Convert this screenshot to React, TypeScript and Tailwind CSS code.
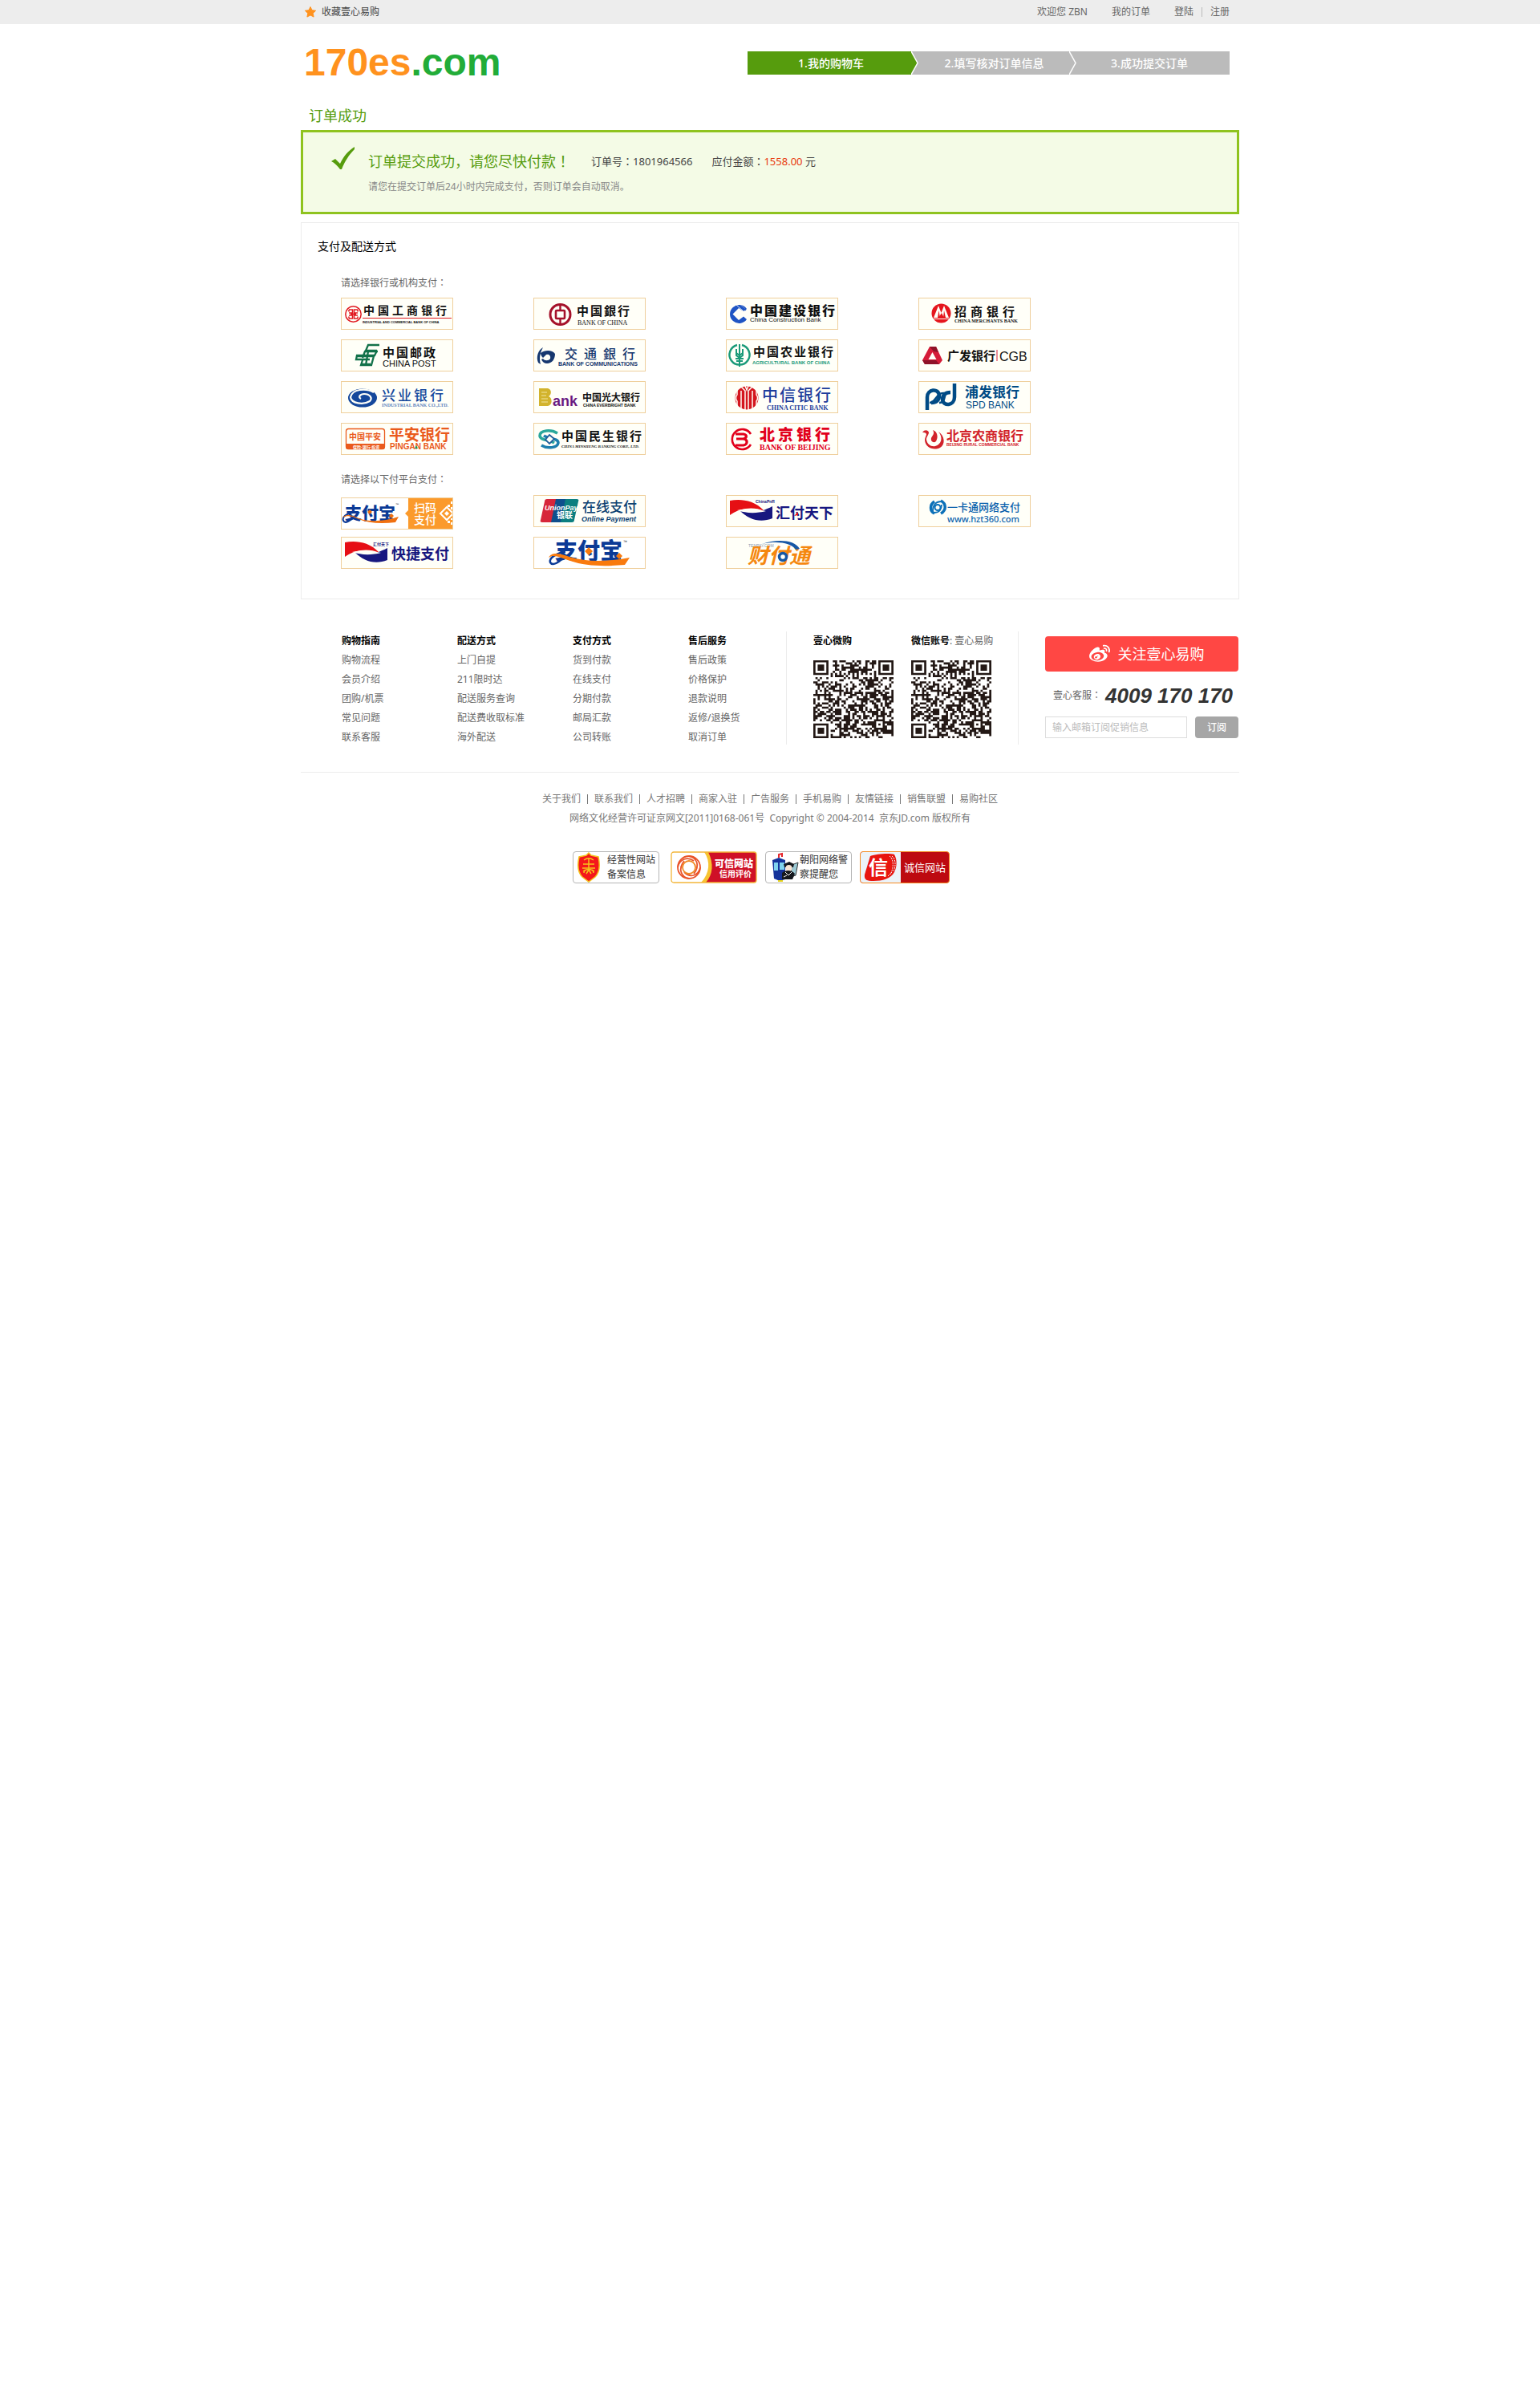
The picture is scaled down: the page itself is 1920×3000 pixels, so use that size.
import React from "react";
import { FaWeibo } from "react-icons/fa";

const CJK = '"Noto Sans","Noto Sans CJK SC",sans-serif';
const SANS = '"Liberation Sans","Noto Sans CJK SC",sans-serif';
const SERIF = '"Liberation Serif",serif';

type TProps = {
  x: number;
  y: number;
  s: number;
  c?: string;
  w?: number;
  f?: string;
  i?: boolean;
  pitch?: number;
  children: string;
};

function T({ x, y, s, c = "#111111", w = 400, f = SANS, i = false, pitch, children }: TProps) {
  const xs = pitch ? Array.from(children, (_, n) => x + n * pitch).join(" ") : x;
  return (
    <text x={xs} y={y} fontSize={s} fill={c} fontWeight={w} fontFamily={f} fontStyle={i ? "italic" : "normal"}>
      {children}
    </text>
  );
}

function Swoosh() {
  return (
    <g>
      <path d="M5 25V7c12-2 29-2 43 13-14-6-30-4-43 5z" fill="#e60f14" />
      <path d="M17 19c14 5 28 2 41-5v15c-15 6-29 2-41-10z" fill="#17177f" />
      <path d="M14 19c12-3 24-2 36 1-12 3-24 3-36-1z" fill="#fffff8" />
    </g>
  );
}

type Logo = { name: string; art: React.ReactNode };

const banks: Logo[] = [
  {
    name: "中国工商银行",
    art: (
      <g>
        <circle cx="15.5" cy="20.5" r="9.7" fill="none" stroke="#e11b22" strokeWidth="1.5" />
        <path d="M10 15h4.500v4H10M10 26h4.500v-4H10M21 15h-4.500v4H21M21 26h-4.500v-4H21M10 15v2.500M21 15v2.500M10 26v-2.500M21 26v-2.500M12 20.500h7" fill="none" stroke="#e11b22" strokeWidth="1.5" />
        <T x={28} y={21} s={14} w={700} pitch={18}>中国工商银行</T>
        <path d="M27 25.500h111" stroke="#e11b22" />
        <T x={27} y={32} s={4} w={700}>INDUSTRIAL AND COMMERCIAL BANK OF CHINA</T>
      </g>
    ),
  },
  {
    name: "中国银行",
    art: (
      <g>
        <circle cx="33.5" cy="21" r="12.5" fill="none" stroke="#a5122b" strokeWidth="3" />
        <rect x="28" y="16" width="11" height="10" rx="1" fill="none" stroke="#a5122b" strokeWidth="2.600" />
        <path d="M33.500 8v8M33.500 26v8" stroke="#a5122b" strokeWidth="2.400" />
        <T x={54} y={22} s={15} w={700} pitch={17}>中国銀行</T>
        <T x={55} y={34} s={8} f={SERIF}>BANK OF CHINA</T>
      </g>
    ),
  },
  {
    name: "中国建设银行",
    art: (
      <g>
        <path d="M26 14a11.500 11.500 0 1 0 0 13l-4-3.500-6 4.500-7.500-7.500L16 13l6 4z" fill="#1f55c4" />
        <path d="M13 9l9 8M17 8l8 7" stroke="#fffff8" strokeWidth="0.800" />
        <path d="M17 9.500l8 6" stroke="#1f55c4" strokeWidth="1.800" />
        <T x={30} y={22} s={16} w={900} pitch={18}>中国建设银行</T>
        <T x={30} y={30} s={8}>China Construction Bank</T>
      </g>
    ),
  },
  {
    name: "招商银行",
    art: (
      <g>
        <circle cx="28.500" cy="19.500" r="12" fill="#e5161d" />
        <path d="M19 25l6-15 3.500 9L32 10l6 15h-6l-3-6-4 6z" fill="#fffff8" />
        <path d="M24 25l1.500-9 1.500 9zM31 25l1-9 2 9z" fill="#e5161d" />
        <path d="M18 26.500h21" stroke="#fffff8" />
        <T x={45} y={23} s={15} w={700} pitch={20}>招商银行</T>
        <T x={45} y={31} s={6} w={700} f={SERIF}>CHINA MERCHANTS BANK</T>
      </g>
    ),
  },
  {
    name: "中国邮政",
    art: (
      <g>
        <path d="M48 7H34l-3 7h14M46 15H30l-3 8M19 21h22l-3 11H25l2-6M45 14l-3 6H20l-1 5h17M34 15l-3 17M26 31h11" fill="none" stroke="#12714a" strokeWidth="2.300" />
        <T x={52} y={22} s={15} w={700} pitch={17}>中国邮政</T>
        <T x={52} y={34} s={11}>CHINA POST</T>
      </g>
    ),
  },
  {
    name: "交通银行",
    art: (
      <g>
        <path d="M12 10c-6 3-9 12-6 19l3 2c-2-7-1-14 3-21z" fill="#16376f" />
        <path d="M9 17c5-4 15-4 18 1 0 7-4 12-10 12-3 0-6-2-7-5l2-1c2 3 7 3 9 0 1-4-2-6-5-5l-4 4c-2-2-3-4-3-6z" fill="#16376f" />
        <T x={39} y={24} s={16} w={500} c="#16376f" pitch={24}>交通銀行</T>
        <T x={31} y={33} s={7} w={700} c="#16376f">BANK OF COMMUNICATIONS</T>
      </g>
    ),
  },
  {
    name: "中国农业银行",
    art: (
      <g>
        <path d="M14 7a12.500 12.500 0 1 0 6 0" fill="none" stroke="#1a9a78" strokeWidth="2.400" />
        <path d="M17 6v28M13 12v8l4 3 4-3v-8M13 17l4 3 4-3M12 24h10M13 27h8" fill="none" stroke="#1a9a78" strokeWidth="2" />
        <T x={34} y={21} s={15} w={700} pitch={17}>中国农业银行</T>
        <T x={33} y={31} s={6} w={700} c="#1a9a78">AGRICULTURAL BANK OF CHINA</T>
      </g>
    ),
  },
  {
    name: "广发银行",
    art: (
      <g>
        <path d="M14 9h8l8 17-4 5H8l-3-5z" fill="#d51c38" />
        <path d="M14 9h8l3 7-6-1zM5 26l3 5h18l-4-5z" fill="#8e1228" />
        <path d="M17.500 16l5 9h-10z" fill="#fffff8" />
        <T x={36} y={26} s={15} w={700}>广发银行</T>
        <path d="M98 13v14" stroke="#d51c38" />
        <T x={101} y={27} s={16}>CGB</T>
      </g>
    ),
  },
  {
    name: "兴业银行",
    art: (
      <g>
        <ellipse cx="27" cy="21" rx="18" ry="11.500" fill="#15489c" />
        <path d="M41 14c-10-6-27-4-29 6 1 8 16 10 24 5 4-4 0-9-7-9-5 0-8 4-4 6" fill="none" stroke="#fffff8" strokeWidth="2.200" />
        <T x={51} y={24} s={17} w={500} c="#15489c" pitch={20}>兴业银行</T>
        <T x={51} y={32} s={6} w={700} f={SERIF} c="#5d83bd">INDUSTRIAL BANK CO.,LTD.</T>
      </g>
    ),
  },
  {
    name: "中国光大银行",
    art: (
      <g>
        <path d="M7 9h11c5 1 5 8 1 10 5 2 5 11-1 12H7z" fill="#d2b32c" />
        <path d="M10 14h7M10 18h6M10 22h8M10 26h8" stroke="#f1e5a0" strokeWidth="1" />
        <T x={24} y={31} s={18} w={700} c="#6a1a80">ank</T>
        <T x={61} y={25} s={12} w={700}>中国光大银行</T>
        <T x={62} y={32} s={5} w={700}>CHINA EVERBRIGHT BANK</T>
      </g>
    ),
  },
  {
    name: "中信银行",
    art: (
      <g>
        <circle cx="26" cy="21" r="14.500" fill="#d4161e" />
        <path d="M18 6l6 6v25M34 6l-6 6v25M19 12v25M33 12v25M14 9v8c-2 2-2 6 0 8v9M38 9v8c2 2 2 6 0 8v9M24 6l2 5 2-5" fill="none" stroke="#fffff8" strokeWidth="1.500" />
        <T x={45} y={25} s={20} w={500} c="#1b3d9c" pitch={22}>中信银行</T>
        <T x={51} y={36} s={8} w={700} f={SERIF} c="#1b3d9c">CHINA CITIC BANK</T>
      </g>
    ),
  },
  {
    name: "浦发银行",
    art: (
      <g fill="none" stroke="#004b85">
        <path d="M11 36V20c0-10 14-12 15-2 0 6-4 9-10 9" strokeWidth="4.500" />
        <path d="M45 3v17c0 11-14 12-15 3 0-5 3-9 10-9" strokeWidth="4.500" />
        <path d="M14 27c8 0 8-13 18-12M26 27c7 0 6-6 8-12" strokeWidth="2.500" />
        <g stroke="none">
          <T x={58} y={20} s={17} w={700} c="#004b85">浦发银行</T>
          <T x={59} y={34} s={12} c="#004b85">SPD BANK</T>
        </g>
      </g>
    ),
  },
  {
    name: "平安银行",
    art: (
      <g>
        <rect x="6.500" y="7.500" width="48" height="25" rx="3" fill="none" stroke="#ea5a1c" strokeWidth="1.300" />
        <path d="M6 26h49v4c0 2-1 3-3 3H9c-2 0-3-1-3-3z" fill="#ea5a1c" />
        <T x={10} y={21} s={10} w={700} c="#ea5a1c">中国平安</T>
        <T x={15} y={32} s={5} w={700} c="#ffffff">保险·银行·投资</T>
        <T x={60} y={22} s={19} w={700} c="#ea5a1c">平安银行</T>
        <T x={61} y={33} s={10} w={700} c="#ea5a1c">PINGAN BANK</T>
        <path d="M92 32l2-4 2 4z" fill="#1a9a50" />
      </g>
    ),
  },
  {
    name: "中国民生银行",
    art: (
      <g fill="none">
        <path d="M30 13C22 8 8 9 8 16c0 6 12 5 18 9" stroke="#2aa79b" strokeWidth="3.500" />
        <path d="M10 28c8 5 20 3 21-3 0-6-12-5-18-9" stroke="#1d7fae" strokeWidth="3.500" />
        <path d="M20 15l6 5-6 6-5-5z" stroke="#1f5f9c" strokeWidth="1.800" fill="#fffff8" />
        <T x={35} y={22} s={15} w={700} pitch={17}>中国民生银行</T>
        <T x={35} y={31} s={5} w={700} i f={SERIF}>CHINA MINSHENG BANKING CORP., LTD.</T>
      </g>
    ),
  },
  {
    name: "北京银行",
    art: (
      <g>
        <path d="M31 27a12.500 12.500 0 1 1 0-13" fill="none" stroke="#e2001b" strokeWidth="2.600" />
        <path d="M12 14h10c5 1 4 5 0 6h-9M22 20c6 1 5 7 0 8H12" fill="none" stroke="#e2001b" strokeWidth="3.200" />
        <T x={42} y={22} s={19} w={900} c="#e2001b" pitch={23}>北京银行</T>
        <T x={42} y={34} s={10} w={700} f={SERIF} c="#e2001b">BANK OF BEIJING</T>
      </g>
    ),
  },
  {
    name: "北京农商银行",
    art: (
      <g>
        <path d="M5 12c3-4 7-3 8 0 0 3-3 5-3 9 1 6 6 9 11 8 8-2 10-11 4-18 8 5 9 16 2 20-8 4-18 0-19-9 0-4 2-6 2-8-1-2-3-2-5-2z" fill="#d2232a" />
        <path d="M18 9c6 2 7 9 4 14-3 3-7 0-6-4 1-3 5-5 2-10z" fill="#d2232a" />
        <T x={35} y={22} s={16} w={700} c="#d2232a">北京农商银行</T>
        <T x={35} y={29} s={5} w={700} c="#d2232a">BEIJING RURAL COMMERCIAL BANK</T>
      </g>
    ),
  },
];

const platforms: Logo[] = [
  {
    name: "支付宝扫码支付",
    art: (
      <g>
        <rect x="1" y="1" width="82" height="38" fill="#ffffff" />
        <T x={5} y={27} s={21} w={900} c="#0b3a96">支付宝</T>
        <path d="M15 19C7 20 1 24 3 29c2 4 9 1 13-6" fill="none" stroke="#0b3a96" strokeWidth="2" />
        <path d="M2 25c4-5 12-3 20 1 14 5 31 4 50-2l-4 7c-18 2-34 1-46-4-8-4-14-5-20-2z" fill="#f1700f" />
        <path d="M36 15l3 3-3 3-3-3zM63 20l3 3-3 3-3-3z" fill="#f1700f" />
        <T x={68} y={10} s={4}>™</T>
        <path d="M84 1h55v38H84V24l-4-4 4-4z" fill="#fb9a2c" />
        <T x={91} y={18} s={14} c="#ffffff" w={500}>扫码</T>
        <T x={91} y={33} s={14} c="#ffffff" w={500}>支付</T>
        <path d="M132 12l8 8-8 8-8-8z" fill="none" stroke="#ffffff" strokeWidth="2" />
        <path d="M132 17l3 3-3 3-3-3z" fill="#ffffff" />
        <path d="M133 9h3v3h-3zM137 5h2v3h-2zM137 12h2v3h-2zM133 29h3v3h-3zM137 31h2v3h-2zM137 26h2v2h-2z" fill="#ffffff" />
      </g>
    ),
  },
  {
    name: "银联在线支付",
    art: (
      <g>
        <path d="M17 5h12l-6 29H11c-2 0-3-1-2-3l5-23c0-2 1-3 3-3z" fill="#d7263a" />
        <path d="M28 5h14l-6 29H22z" fill="#0f4f8c" />
        <path d="M40 5h14c2 0 3 1 2 3l-5 23c0 2-1 3-3 3H34z" fill="#0c7f80" />
        <T x={14} y={19} s={9} w={700} i c="#ffffff">UnionPay</T>
        <T x={29} y={29} s={10} w={700} c="#ffffff">银联</T>
        <T x={61} y={21} s={17} w={500} c="#0d4272">在线支付</T>
        <T x={60} y={33} s={9} w={700} i c="#0d4272">Online Payment</T>
      </g>
    ),
  },
  {
    name: "汇付天下",
    art: (
      <g>
        <Swoosh />
        <T x={37} y={10} s={5} w={700} c="#17177f">ChinaPnR</T>
        <T x={62} y={29} s={18} w={700} c="#17177f">汇付天下</T>
        <path d="M85 26l5-5v4z" fill="#e60f14" />
      </g>
    ),
  },
  {
    name: "一卡通网络支付",
    art: (
      <g>
        <path d="M20 8c-6 4-6 12 0 15M28 7c7 4 7 12 0 16" fill="none" stroke="#0b70b8" strokeWidth="3.500" />
        <path d="M18 20c0-8 4-12 11-12M20 22c6 0 9-4 9-10" fill="none" stroke="#0b70b8" strokeWidth="1.800" />
        <circle cx="24" cy="15.500" r="3.500" fill="none" stroke="#0b70b8" strokeWidth="2" />
        <T x={36} y={20} s={13} w={500} c="#0b62ad">一卡通网络支付</T>
        <T x={36} y={34} s={11} w={500} f={CJK} c="#0b62ad">www.hzt360.com</T>
      </g>
    ),
  },
  {
    name: "快捷支付",
    art: (
      <g>
        <Swoosh />
        <T x={40} y={11} s={5} w={700} c="#17177f">汇付天下</T>
        <T x={63} y={28} s={18} w={700} c="#17177f">快捷支付</T>
      </g>
    ),
  },
  {
    name: "支付宝",
    art: (
      <g>
        <rect x="1" y="1" width="138" height="38" fill="#ffffff" />
        <T x={27} y={28} s={28} w={900} c="#0b3a96">支付宝</T>
        <path d="M40 19c-10 1-21 7-19 13 3 5 12 0 18-9" fill="none" stroke="#0b3a96" strokeWidth="2.500" />
        <path d="M19 26c4-8 15-5 26-1 22 7 48 6 75 1l-6 9c-24 2-48 2-68-5-12-4-21-9-27-4z" fill="#f97a0d" />
        <path d="M69 13l5 5-5 5-5-5zM107 20l4 4-4 4-4-4z" fill="#f97a0d" />
        <T x={112} y={8} s={5}>™</T>
      </g>
    ),
  },
  {
    name: "财付通",
    art: (
      <g>
        <T x={28} y={13} s={5} c="#8797ad">TENPAY.COM</T>
        <T x={27} y={33} s={26} w={700} i c="#f5870f">财付通</T>
        <path d="M45 9c18-6 40-6 47 6l-5 1c-6-9-24-11-42-7z" fill="#1657a5" />
        <circle cx="71" cy="25" r="4.500" fill="#fffff8" stroke="#1657a5" strokeWidth="3.500" />
      </g>
    ),
  },
];

function Tile({ logo, className = "" }: { logo: Logo; className?: string }) {
  return (
    <button
      type="button"
      aria-label={logo.name}
      className={"h-10 w-[140px] overflow-hidden border border-[#efcf9c] bg-[#fffff8] " + className}
    >
      <svg viewBox="1 1 138 38" className="block h-full w-full" aria-hidden="true">
        {logo.art}
      </svg>
    </button>
  );
}

const N = 37;

function qrPath(): string {
  let seed = 20147;
  const parts: string[] = [];
  const ring = (r: number, c: number, size: number) => {
    const d = Math.max(Math.abs(r), Math.abs(c));
    return size === 7 ? d !== 2 : d !== 1;
  };
  for (let r = 0; r < N; r++) {
    for (let c = 0; c < N; c++) {
      seed = (seed * 1103515245 + 12345) % 2147483648;
      let on = (seed >> 12) % 100 < 54;
      const top = r < 8;
      const left = c < 8;
      const right = c > N - 9;
      const bottom = r > N - 9;
      if ((top && left) || (top && right) || (bottom && left)) {
        const cr = top ? 3 : N - 4;
        const cc = left ? 3 : N - 4;
        const dr = r - cr;
        const dc = c - cc;
        on = Math.abs(dr) <= 3 && Math.abs(dc) <= 3 && ring(dr, dc, 7);
      } else if (Math.abs(r - 30) <= 2 && Math.abs(c - 30) <= 2) {
        on = ring(r - 30, c - 30, 5);
      } else if (r === 6 || c === 6) {
        on = (r + c) % 2 === 0;
      }
      if (on) parts.push("M" + c + " " + r + "h1v1h-1z");
    }
  }
  return parts.join("");
}

const QR = qrPath();

function QrCode({ label }: { label: string }) {
  return (
    <svg
      role="img"
      aria-label={label}
      viewBox="0 0 37 37"
      preserveAspectRatio="none"
      className="mt-3 block h-[97px] w-[100px]"
    >
      <path d={QR} fill="#231815" />
    </svg>
  );
}

/* Full-width punctuation centred in its cell. */
function P({ children }: { children: string }) {
  return <span className="font-['Noto_Sans_CJK_TC',sans-serif] leading-none">{children}</span>;
}

const helpColumns = [
  { title: "购物指南", items: ["购物流程", "会员介绍", "团购/机票", "常见问题", "联系客服"] },
  { title: "配送方式", items: ["上门自提", "211限时达", "配送服务查询", "配送费收取标准", "海外配送"] },
  { title: "支付方式", items: ["货到付款", "在线支付", "分期付款", "邮局汇款", "公司转账"] },
  { title: "售后服务", items: ["售后政策", "价格保护", "退款说明", "返修/退换货", "取消订单"] },
];

const siteLinks = ["关于我们", "联系我们", "人才招聘", "商家入驻", "广告服务", "手机易购", "友情链接", "销售联盟", "易购社区"];

function TopBar() {
  return (
    <div className="bg-[#ededed] text-xs text-[#666666]">
      <div className="mx-auto flex h-[30px] w-full max-w-[1170px] items-center justify-between pr-3 pl-1">
        <a href="#" className="flex items-center gap-[6px] text-[#444444]">
          <svg viewBox="0 0 16 16" className="h-4 w-4" aria-hidden="true">
            <path
              d="M8 1.500l2 4.200 4.600.6-3.400 3.200.9 4.600L8 11.900l-4.100 2.200.9-4.600L1.400 6.300 6 5.700z"
              fill="#ff921e"
              stroke="#ff921e"
              strokeLinejoin="round"
            />
          </svg>
          收藏壹心易购
        </a>
        <nav className="flex items-center">
          <span>欢迎您 ZBN</span>
          <a href="#" className="ml-[30px]">我的订单</a>
          <a href="#" className="ml-[30px]">登陆</a>
          <span className="mx-[10px] h-3 w-px bg-[#bbbbbb]" />
          <a href="#">注册</a>
        </nav>
      </div>
    </div>
  );
}

function Arrow({ left }: { left: string }) {
  return (
    <svg viewBox="0 0 10 29" className="h-[29px] w-[10px] shrink-0" aria-hidden="true">
      <path d="M0 0h10v29H0z" fill="#bbbbbb" />
      <path d="M0 0l8 14.500L0 29z" fill={left} />
      <path d="M0 0l8 14.500L0 29" fill="none" stroke="#ffffff" strokeWidth="1.500" />
    </svg>
  );
}

function Steps() {
  return (
    <ol className="flex h-[29px] w-[601px] text-sm leading-[29px] font-medium text-white">
      <li className="flex w-[214px]">
        <span className="flex-1 bg-[#569c0d] pl-1 text-center">1.我的购物车</span>
        <Arrow left="#569c0d" />
      </li>
      <li className="flex w-[197px]">
        <span className="flex-1 bg-[#bbbbbb] text-center">2.填写核对订单信息</span>
        <Arrow left="#bbbbbb" />
      </li>
      <li className="flex-1 bg-[#bbbbbb] pr-[10px] text-center">3.成功提交订单</li>
    </ol>
  );
}

function Badges() {
  return (
    <div className="mt-[29px] flex justify-center pr-[22px]">
      <a href="#" className="mr-[14px] flex h-10 w-[108px] items-center rounded-sm border border-[#b5b5b5] pl-1">
        <svg viewBox="0 0 30 38" className="h-[38px] w-[30px]" aria-hidden="true">
          <path d="M15 1l3 3 9 2c2 9 2 19-4 25l-8 6-8-6C1 25 1 15 3 6l9-2z" fill="#f4181b" stroke="#f5c31c" strokeWidth="1.500" />
          <path d="M15 8v16M9 10c4-3 8-3 12 0M8 15h14M7 20h16M9 26c0-6 12-6 12 0M12 27l3-5 3 5M8 24l3-2M22 24l-3-2" fill="none" stroke="#f5c31c" strokeWidth="1.500" />
        </svg>
        <span className="ml-2 text-xs leading-[18px] text-[#333333]">
          经营性网站
          <br />
          备案信息
        </span>
      </a>
      <a href="#" aria-label="可信网站信用评价" className="mr-[10px] block h-10 w-[108px]">
        <svg viewBox="0 0 108 40" className="block h-10 w-[108px]" aria-hidden="true">
          <rect x="1" y="1" width="106" height="38" rx="3" fill="#ffffff" />
          <path d="M44 1h60c2 0 3 1 3 3v32c0 2-1 3-3 3H41c10-12 11-26 3-38z" fill="#cf1127" />
          <path d="M42 1h5c7 14 6 28-3 38h-6c11-12 12-26 4-38z" fill="#f7c331" />
          <rect x="1" y="1" width="106" height="38" rx="3" fill="none" stroke="#f3b63a" strokeWidth="1.300" />
          <g fill="none" strokeWidth="1.800">
            <circle cx="23" cy="20" r="14" stroke="#e9542a" />
            <path d="M23 6c10 2 14 12 6 22M37 20c-2 10-12 14-20 6M23 34c-10-2-14-12-6-22M9 20C11 10 21 6 29 12" stroke="#e9542a" />
            <circle cx="23" cy="20" r="8" stroke="#f08a24" />
          </g>
          <T x={55} y={20} s={12} w={900} c="#ffffff">可信网站</T>
          <T x={61} y={32} s={10} w={700} c="#ffffff">信用评价</T>
        </svg>
      </a>
      <a href="#" className="mr-[10px] flex h-10 w-[108px] items-center rounded-sm border border-[#b5b5b5] pl-[5px]">
        <svg viewBox="0 0 36 38" className="h-[38px] w-9" aria-hidden="true">
          <path d="M3 10l8-3 8 3v24l-7 2-7-3z" fill="#14339b" />
          <path d="M5 13h5v10H5zM12 13h6v9h-6z" fill="#7fd3ee" />
          <path d="M11 7V3l4-1v4" fill="none" stroke="#e5252a" strokeWidth="2" />
          <path d="M27 16l8-3-3 16-6 2z" fill="#9cc9d4" stroke="#333333" />
          <path d="M17 15l7-3 6 3-1 4H18z" fill="#15171d" />
          <circle cx="23.500" cy="20" r="4" fill="#f6e3d3" />
          <path d="M15 26c4-4 12-4 16 1l-3 7H15z" fill="#15171d" />
          <path d="M19 25l4 4 4-4M17 31l4-2" stroke="#ffffff" fill="none" />
          <path d="M10 36h6" stroke="#e8d51c" strokeWidth="2" />
        </svg>
        <span className="ml-px text-xs leading-[18px] whitespace-nowrap text-[#333333]">
          朝阳网络警
          <br />
          察提醒您
        </span>
      </a>
      <a href="#" className="flex h-10 w-28 overflow-hidden rounded-sm border border-[#f58a1f] bg-[#bd0a10]">
        <svg viewBox="0 0 50 38" className="h-[38px] w-[50px] bg-[#ecf3f9]" aria-hidden="true">
          <path d="M12 5C20 2 36 1 42 3c4 7 3 16 0 22-4 8-15 11-26 11-8 0-12-1-11-8z" fill="#e8150f" />
          <path d="M36 5c5 3 6 14 1 23M39 5c5 4 5 12 2 19M34 30l5-5" fill="none" stroke="#ecf3f9" strokeDasharray="2 1" />
          <T x={10} y={28} s={24} w={700} c="#ffffff">信</T>
        </svg>
        <span className="flex-1 text-center text-[13px] leading-[38px] text-white">诚信网站</span>
      </a>
    </div>
  );
}

export default function App() {
  return (
    <div className="min-h-screen bg-white font-['Noto_Sans','Noto_Sans_CJK_SC',sans-serif] text-xs text-[#666666]">
      <TopBar />
      <div className="mx-auto w-full max-w-[1170px]">
        <header className="flex h-24 items-center justify-between pr-3 pl-1">
          <a href="#" className="font-['Liberation_Sans',sans-serif] text-[48px] leading-[56px] font-bold text-[#ff921e]">
            170es<span className="text-[#22ac38]">.com</span>
          </a>
          <Steps />
        </header>

        <h1 className="pl-[10px] text-lg leading-9 text-[#569c0d]">订单成功</h1>

        <section className="flex border-[3px] border-[#8fc31f] bg-[#f4fbe6] pt-[18px] pb-[17px] pl-[35px]">
          <svg viewBox="0 0 30 30" className="h-[30px] w-[30px] shrink-0" aria-hidden="true">
            <path d="M0 18l5-3 6 6C15 12 21 5 29 0v3C22 10 17 18 13 28h-2C8 24 4 20 0 18z" fill="#569c0d" />
          </svg>
          <div className="ml-4">
            <div className="flex h-9 items-center leading-9">
              <h2 className="text-lg leading-9 text-[#569c0d]">
                订单提交成功，请您尽快付款<P>！</P>
              </h2>
              <p className="ml-[26px] text-[13px] text-[#444444]">
                订单号<P>：</P>1801964566
              </p>
              <p className="ml-6 text-[13px] text-[#444444]">
                应付金额<P>：</P>
                <span className="text-[#e8380d]">1558.00</span> 元
              </p>
            </div>
            <p className="leading-7 text-[#888888]">请您在提交订单后24小时内完成支付，否则订单会自动取消。</p>
          </div>
        </section>

        <section className="mt-[10px] border border-[#ececec] px-5 pt-[17px] pb-[37px]">
          <h2 className="text-sm leading-6 text-black">支付及配送方式</h2>
          <div className="pl-[29px]">
            <h3 className="mt-[22px] leading-6">
              请选择银行或机构支付<P>：</P>
            </h3>
            <div className="mt-[6px] grid grid-cols-[repeat(4,240px)] gap-y-3">
              {banks.map((b) => (
                <Tile key={b.name} logo={b} />
              ))}
            </div>
            <h3 className="mt-[19px] leading-6">
              请选择以下付平台支付<P>：</P>
            </h3>
            <div className="mt-[7px] grid grid-cols-[repeat(4,240px)] items-start gap-y-[9px]">
              {platforms.map((p, i) => (
                <Tile key={p.name} logo={p} className={i === 0 ? "mt-[3px]" : ""} />
              ))}
            </div>
          </div>
        </section>

        <footer className="mt-10">
          <div className="flex h-[141px]">
            <div className="flex w-[606px] border-r border-[#ececec] pl-[51px]">
              {helpColumns.map((col) => (
                <div key={col.title} className="w-36 last:w-auto">
                  <h3 className="leading-6 font-bold text-black">{col.title}</h3>
                  <ul>
                    {col.items.map((it) => (
                      <li key={it} className="leading-6">
                        <a href="#">{it}</a>
                      </li>
                    ))}
                  </ul>
                </div>
              ))}
            </div>
            <div className="flex w-[289px] gap-[22px] border-r border-[#ececec] pl-[33px]">
              <div className="w-[100px]">
                <h3 className="leading-6 font-bold text-black">壹心微购</h3>
                <QrCode label="壹心微购" />
              </div>
              <div className="w-[100px]">
                <h3 className="leading-6 font-bold whitespace-nowrap text-black">
                  微信账号<span className="font-normal text-[#666666]">: 壹心易购</span>
                </h3>
                <QrCode label="微信账号" />
              </div>
            </div>
            <div className="w-[274px] pt-[6px] pl-[33px]">
              <button
                type="button"
                className="flex h-11 w-full items-center justify-center gap-[10px] rounded-sm bg-[#ff4744] pl-3 text-lg text-white"
              >
                <FaWeibo className="h-[26px] w-[26px]" aria-hidden="true" />
                关注壹心易购
              </button>
              <div className="flex h-14 items-center pt-1 pl-[10px] whitespace-nowrap">
                <span>
                  壹心客服<P>：</P>
                </span>
                <span className="ml-[5px] font-['Liberation_Sans',sans-serif] text-[26px] font-bold text-[#333333] italic">
                  4009 170 170
                </span>
              </div>
              <form className="flex justify-between" onSubmit={(e) => e.preventDefault()}>
                <input
                  type="email"
                  aria-label="输入邮箱订阅促销信息"
                  placeholder="输入邮箱订阅促销信息"
                  className="h-[27px] w-[177px] border border-[#dddddd] px-2 placeholder:text-[#bbbbbb]"
                />
                <button type="submit" className="h-[27px] w-[54px] rounded bg-[#a6a6a6] font-medium text-white">
                  订阅
                </button>
              </form>
            </div>
          </div>

          <div className="mt-[34px] border-t border-[#ececec] pt-[21px]">
            <nav className="flex items-center justify-center leading-6 text-[#777777]">
              {siteLinks.map((l, i) => (
                <React.Fragment key={l}>
                  {i > 0 && <span className="mx-2 h-3 w-px bg-[#777777]" />}
                  <a href="#">{l}</a>
                </React.Fragment>
              ))}
            </nav>
            <p className="text-center leading-6 text-[#777777]">
              网络文化经营许可证京网文[2011]0168-061号&nbsp; Copyright © 2004-2014&nbsp; 京东JD.com 版权所有
            </p>
            <Badges />
          </div>
        </footer>
      </div>
    </div>
  );
}
